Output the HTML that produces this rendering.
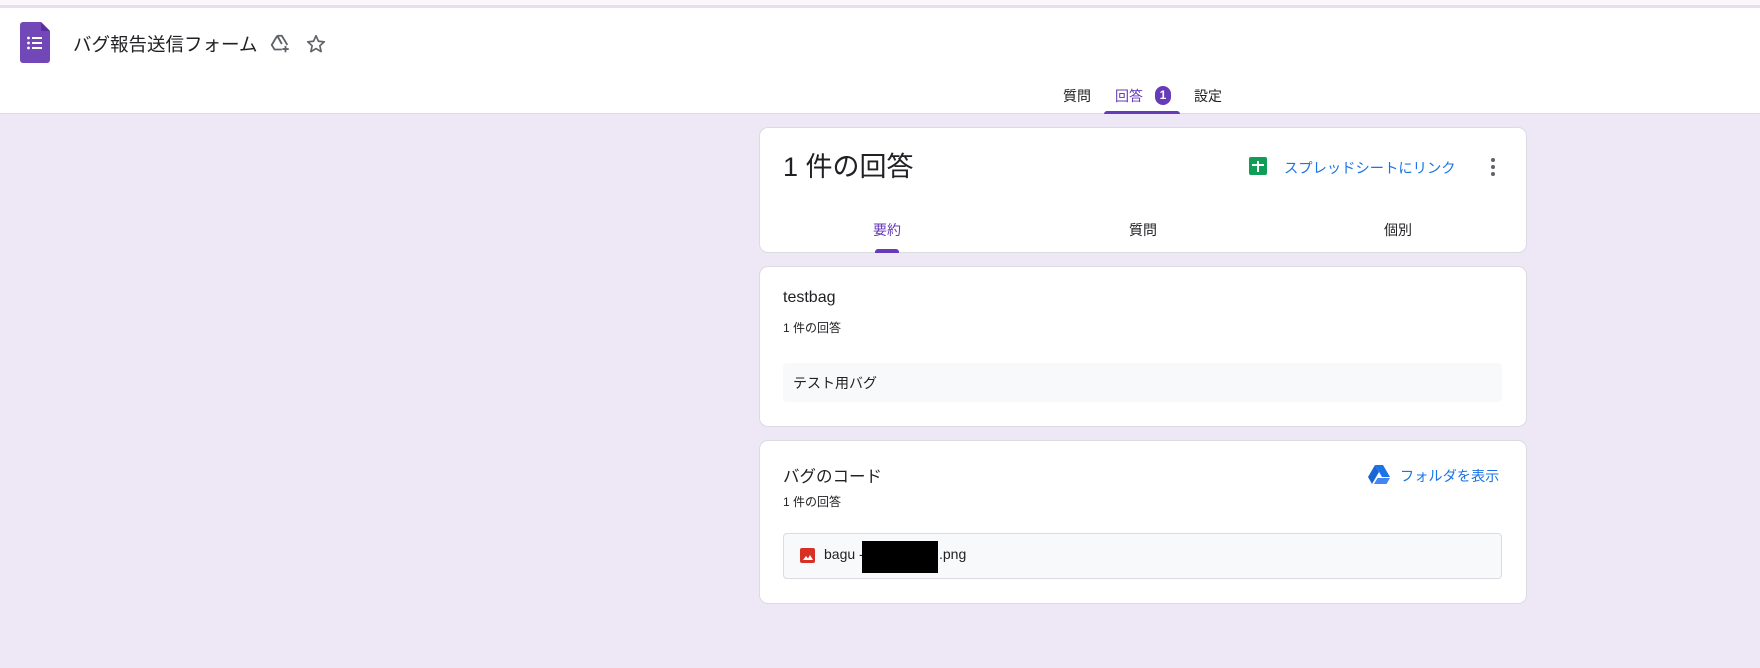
<!DOCTYPE html>
<html><head><meta charset="utf-8"><style>
*{margin:0;padding:0;box-sizing:border-box}
body{width:1760px;height:668px;background:#ede7f6;font-family:"Liberation Sans","Noto Sans CJK JP",sans-serif;color:#202124;position:relative;overflow:hidden}
.a{position:absolute;white-space:nowrap}
.hdr{position:absolute;left:0;top:0;width:1760px;height:114px;background:#fff;border-bottom:1px solid #dadce0}
.card{position:absolute;left:759px;width:768px;background:#fff;border:1px solid #dadce0;border-radius:9px}
</style></head><body>
<div class="hdr"></div>
<div class="a" style="left:0;top:0;width:1760px;height:5px;background:#fbf6fb"></div>
<div class="a" style="left:0;top:5px;width:1760px;height:3px;background:#e8ddef"></div>
<svg class="a" style="left:20px;top:22px" width="30" height="41" viewBox="0 0 30 41"><path d="M3 0h18l9 9v29a3 3 0 0 1-3 3H3a3 3 0 0 1-3-3V3a3 3 0 0 1 3-3z" fill="#7248b9"/><path d="M21 0l9 9h-9z" fill="#5a2ea0"/><g fill="#fff"><circle cx="8.5" cy="16" r="1.4"/><circle cx="8.5" cy="21" r="1.4"/><circle cx="8.5" cy="26" r="1.4"/><rect x="12" y="15" width="10" height="2"/><rect x="12" y="20" width="10" height="2"/><rect x="12" y="25" width="10" height="2"/></g></svg>
<div class="a" style="left:73px;top:32px;font-size:18.5px;line-height:26px">バグ報告送信フォーム</div>
<svg class="a" style="left:269px;top:33px" width="22" height="22" viewBox="0 0 24 24" fill="none" stroke="#5f6368" stroke-width="2"><path d="M9 3h5l6 10M9 3L3 13l3 5h8M9 3l5 9"/><path d="M18 14v7M14.5 17.5h7"/></svg>
<svg class="a" style="left:305px;top:33px" width="22" height="22" viewBox="0 0 24 24"><path d="M12 3l2.7 6 6.3.6-4.8 4.3 1.4 6.4L12 17l-5.6 3.3 1.4-6.4L3 9.6 9.3 9z" fill="none" stroke="#5f6368" stroke-width="1.8" stroke-linejoin="round"/></svg>
<div class="a" style="left:1063px;top:86px;font-size:14px">質問</div>
<div class="a" style="left:1115px;top:86px;font-size:14px;color:#673ab7">回答</div>
<div class="a" style="left:1155px;top:86px;width:16px;height:19px;border-radius:8px;background:#673ab7;color:#fff;font-size:12px;font-weight:bold;text-align:center;line-height:19px">1</div>
<div class="a" style="left:1194px;top:86px;font-size:14px">設定</div>
<div class="a" style="left:1104px;top:111px;width:76px;height:3px;background:#673ab7;border-radius:3px 3px 0 0"></div>

<div class="card" style="top:127px;height:126px"></div>
<div class="a" style="left:783px;top:150px;font-size:27px;line-height:34px">1 件の回答</div>
<svg class="a" style="left:1249px;top:157px" width="18" height="18" viewBox="0 0 18 18"><rect width="18" height="18" rx="2" fill="#0f9d58"/><path d="M3 8h12M9 4v11" stroke="#fff" stroke-width="2"/></svg>
<div class="a" style="left:1284px;top:157px;font-size:14.3px;color:#1a73e8">スプレッドシートにリンク</div>
<svg class="a" style="left:1489px;top:157px" width="8" height="20"><circle cx="4" cy="3" r="2" fill="#5f6368"/><circle cx="4" cy="10" r="2" fill="#5f6368"/><circle cx="4" cy="17" r="2" fill="#5f6368"/></svg>
<div class="a" style="left:873px;top:220px;font-size:14px;color:#673ab7">要約</div>
<div class="a" style="left:1129px;top:220px;font-size:14px">質問</div>
<div class="a" style="left:1384px;top:220px;font-size:14px">個別</div>
<div class="a" style="left:875px;top:249px;width:24px;height:4px;background:#673ab7;border-radius:3px 3px 0 0"></div>

<div class="card" style="top:266px;height:161px"></div>
<div class="a" style="left:783px;top:289px;font-size:16px">testbag</div>
<div class="a" style="left:783px;top:319px;font-size:12px">1 件の回答</div>
<div class="a" style="left:783px;top:363px;width:719px;height:39px;background:#f8f9fa;border-radius:4px"></div>
<div class="a" style="left:793px;top:373px;font-size:14px">テスト用バグ</div>

<div class="card" style="top:440px;height:164px"></div>
<div class="a" style="left:783px;top:463px;font-size:16.5px">バグのコード</div>
<div class="a" style="left:783px;top:493px;font-size:12px">1 件の回答</div>
<svg class="a" style="left:1368px;top:465px" width="22" height="19" viewBox="0 0 22 19"><path d="M7 0h8l7 12h-8z" fill="#1a73e8"/><path d="M7 0l4 7-7 12-4-7z" fill="#1967d2"/><path d="M6 19l3.5-6H22l-3.5 6z" fill="#4285f4"/></svg>
<div class="a" style="left:1400px;top:466px;font-size:14.2px;color:#1a73e8">フォルダを表示</div>
<div class="a" style="left:783px;top:533px;width:719px;height:46px;background:#f8f9fa;border:1px solid #dadce0;border-radius:4px"></div>
<svg class="a" style="left:800px;top:548px" width="15" height="15" viewBox="0 0 15 15"><rect width="15" height="15" rx="2" fill="#d93025"/><path d="M3 12l3-4 2 2.5 2-3.5 3 5z" fill="#fff"/></svg>
<div class="a" style="left:824px;top:546px;font-size:14px">bagu -</div>
<div class="a" style="left:862px;top:541px;width:76px;height:32px;background:#000"></div>
<div class="a" style="left:939px;top:546px;font-size:14px">.png</div>
</body></html>
